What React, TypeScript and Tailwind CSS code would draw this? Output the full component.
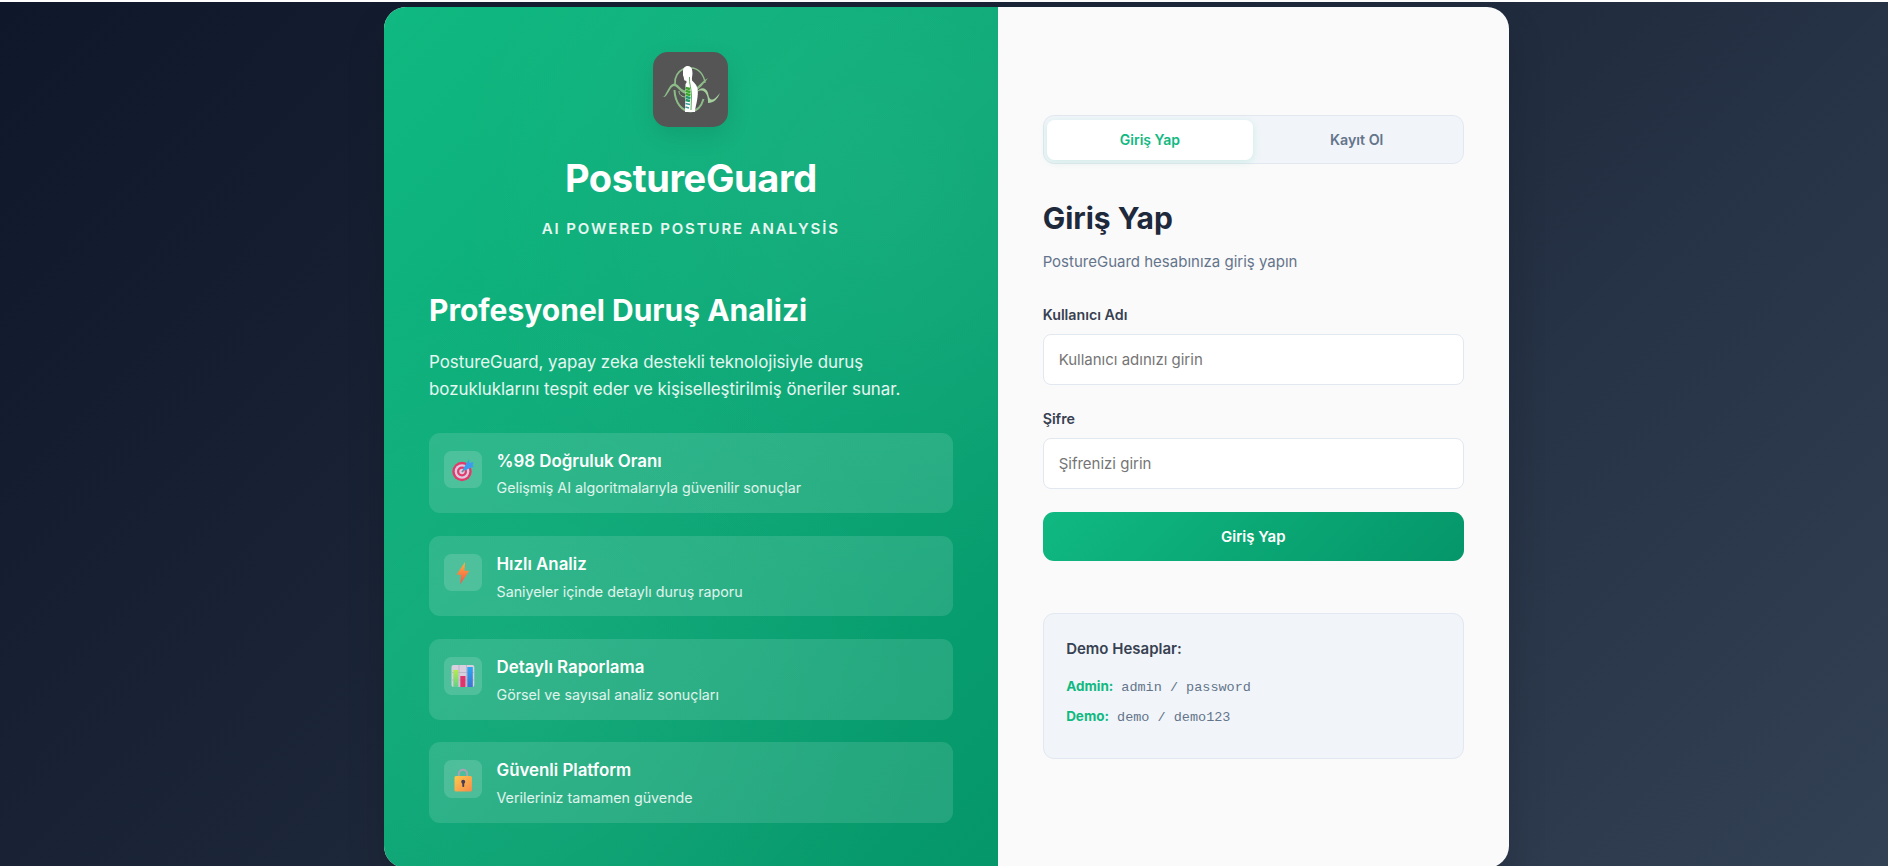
import React from "react";

function Logo() {
  return (
    <svg viewBox="1 0 100 100" className="h-[100px] w-[100px] shrink-0" fill="none">
      <path d="M44 28.500 C37 32 34.500 38 35 44" stroke="#8dbb88" strokeWidth="1.700" />
      <path d="M34.500 50 C35 63 42 71.500 51 71.500 C57 71 61.500 66 63.500 59" stroke="#8dbb88" strokeWidth="2" />
      <path d="M51 28 C59 28 64 35 65 43" stroke="#8dbb88" strokeWidth="1.400" />
      <path d="M22 56.500 C25 60 28 44 34 43.500 C40 44 40 51.500 48 50.500 C58 50 60 42 68 38 C63 45 56 53 49 54 C41 55 39 47 34 46 C29 47 27 60 22 56.500Z" fill="#8dbb88" />
      <path d="M57 52 C60 47 66 47 68 53 C69 58 70 60 73 59.500 C76 58 78 55 80 53 C77 60 74 62.500 68 63 C68.500 56 65 47 57 52Z" fill="#a6cf9e" />
      <path d="M43 31 C43 25 52 24 52.300 31 C53 35 51.500 37 52 40.500 C55.500 44 58.300 46 57.800 54 C57.300 62 55.500 66 55 72 L45 72 L45.500 44 C46.500 43 47 42 46 40.500 C43.500 41.500 44.500 38 43 35.500Z" fill="#fff" />
      <path d="M49.500 37 C49 44 51.500 48 51.500 56 L51 70" stroke="#5cae5b" strokeWidth="1" />
      <path d="M45.500 48 L50 49 M45.500 51 L50.500 52 M45.500 54 L50.500 55" stroke="#3aa62f" strokeWidth="2.700" />
      <path d="M45.500 57 L50.500 58 M45.500 60 L50 61" stroke="#239a6b" strokeWidth="2.500" />
      <path d="M45.500 63.500 L50 64.500 M45.500 67 L49 68" stroke="#3a9b9c" strokeWidth="1.500" />
      <path d="M39 51 C39 55 42 57 46 57" stroke="#9ccb96" strokeWidth="1" />
    </svg>
  );
}

function TargetIcon() {
  return (
    <svg viewBox="0 0 24 24" className="h-6 w-6">
      <circle cx="11" cy="13.500" r="9.700" fill="#e3396b" />
      <circle cx="11" cy="13.500" r="7.300" fill="#dccbe0" />
      <circle cx="11" cy="13.500" r="5" fill="#e3396b" />
      <circle cx="11" cy="13.500" r="2.700" fill="#dccbe0" />
      <path d="M11 14 L16 8" stroke="#7486a0" strokeWidth="1.800" />
      <path d="M12 11 L15 6 L18 1.500 L18.500 5 L22.500 4 L21.500 7.500 L23 8.500 L18 10.500 L14 12.500Z" fill="#3d9bee" />
    </svg>
  );
}

function BoltIcon() {
  return (
    <svg viewBox="0 0 24 24" className="h-6 w-6">
      <defs>
        <linearGradient id="bolt" x1="0" y1="0" x2="0" y2="1">
          <stop offset="0" stopColor="#ffb43a" />
          <stop offset="1" stopColor="#f5504d" />
        </linearGradient>
      </defs>
      <path d="M14 1 L5.500 13.800 H10 L9.300 23.300 L18.300 9.800 H13.500Z" fill="url(#bolt)" />
    </svg>
  );
}

function ChartIcon() {
  return (
    <svg viewBox="0 0 24 24" className="h-6 w-6">
      <defs>
        <linearGradient id="barGreen" x1="0" y1="0" x2="0" y2="1">
          <stop offset="0" stopColor="#b5ea4e" />
          <stop offset="1" stopColor="#62d18c" />
        </linearGradient>
        <linearGradient id="barBlue" x1="0" y1="0" x2="0" y2="1">
          <stop offset="0" stopColor="#2ba7f3" />
          <stop offset="1" stopColor="#3d73cf" />
        </linearGradient>
      </defs>
      <rect x=".5" y="1" width="22.800" height="22" rx="2" fill="#d8d0df" />
      <path d="M8 1 V23 M15.500 1 V23 M.5 8.500 H23.300 M.5 16 H23.300" stroke="#b9b0c4" strokeWidth=".8" />
      <rect x="2.300" y="6" width="5" height="17" fill="url(#barGreen)" />
      <rect x="9.300" y="12" width="5.200" height="11" fill="#e0356c" />
      <rect x="16.300" y="3" width="5.500" height="20" fill="url(#barBlue)" />
    </svg>
  );
}

function LockIcon() {
  return (
    <svg viewBox="0 0 24 24" className="h-6 w-6">
      <defs>
        <linearGradient id="lock" x1="0" y1="0" x2="1" y2="1">
          <stop offset="0" stopColor="#ffc94a" />
          <stop offset="1" stopColor="#f58a4d" />
        </linearGradient>
      </defs>
      <path d="M7.800 9 V6.300 C7.800 .3 16.200 .3 16.200 6.300 V9" fill="none" stroke="#a9a3b5" strokeWidth="2" />
      <rect x="3.500" y="8" width="17.500" height="15.500" rx="1.500" fill="url(#lock)" />
      <circle cx="12.200" cy="13.800" r="2" fill="#4a3a57" />
      <rect x="11.300" y="14" width="1.900" height="5" rx=".8" fill="#4a3a57" />
    </svg>
  );
}

const features = [
  { icon: <TargetIcon />, title: "%98 Doğruluk Oranı", text: "Gelişmiş AI algoritmalarıyla güvenilir sonuçlar" },
  { icon: <BoltIcon />, title: "Hızlı Analiz", text: "Saniyeler içinde detaylı duruş raporu" },
  { icon: <ChartIcon />, title: "Detaylı Raporlama", text: "Görsel ve sayısal analiz sonuçları" },
  { icon: <LockIcon />, title: "Güvenli Platform", text: "Verileriniz tamamen güvende" },
];

const accounts = [
  { name: "Admin:", login: "admin / password" },
  { name: "Demo:", login: "demo / demo123" },
];

function Field({ label, placeholder, type }: { label: string; placeholder: string; type: string }) {
  return (
    <label className="mb-[23px] block">
      <span className="mb-[8px] block text-[14.25px] leading-[22px] font-semibold text-[#374151]">{label}</span>
      <input
        type={type}
        placeholder={placeholder}
        className="block h-[51px] w-full rounded-[8px] border border-[#e2e8f0] bg-white px-[15px] text-[15px] placeholder:text-[#757575]"
      />
    </label>
  );
}

export default function App() {
  return (
    <div className="h-[866px] overflow-hidden bg-white pt-[2px] font-[Inter,sans-serif]">
      <div className="flex h-[871px] items-start justify-center bg-[linear-gradient(135deg,#0f172a_0%,#1e293b_50%,#334155_100%)] pt-[5px] pl-[5px]">
        <main className="grid h-[861px] w-[1125px] grid-cols-[1.2fr_1fr] overflow-hidden rounded-[22px] bg-[#fafafa] shadow-[0_19px_38px_rgba(0,0,0,0.15)]">
          <section className="bg-[radial-gradient(circle_at_20%_80%,rgba(255,255,255,0.05)_0%,transparent_50%),radial-gradient(circle_at_80%_20%,rgba(255,255,255,0.05)_0%,transparent_50%),linear-gradient(135deg,#10b981_0%,#059669_100%)] px-[45px] pt-[45px] text-white">
            <div className="flex flex-col items-center">
              <div className="flex h-[75px] w-[75px] items-center justify-center rounded-[15px] bg-[#555] shadow-[0_8px_24px_rgba(0,0,0,0.1)]">
                <Logo />
              </div>
              <h1 className="mt-[21px] text-[38px] leading-[60px] font-bold tracking-[-0.38px]">PostureGuard</h1>
              <p className="mt-[9px] text-[15px] leading-[24px] font-semibold tracking-[1.88px] text-white/90">AI POWERED POSTURE ANALYSİS</p>
            </div>
            <h2 className="mt-[45px] text-[30px] leading-[48px] font-bold">Profesyonel Duruş Analizi</h2>
            <p className="mt-[15px] text-[16.875px] leading-[27px] text-white/90">
              PostureGuard, yapay zeka destekli teknolojisiyle duruş<br />bozukluklarını tespit eder ve kişiselleştirilmiş öneriler sunar.
            </p>
            <ul className="mt-[29.600px] flex flex-col gap-[22.500px]">
              {features.map((f) => (
                <li key={f.title} className="flex h-[80.700px] items-start gap-[15px] rounded-[11px] bg-white/12 p-[15px]">
                  <span className="mt-[3.200px] flex h-[37.500px] w-[37.500px] shrink-0 items-center justify-center rounded-[7.500px] bg-white/15 pt-[1px]">{f.icon}</span>
                  <div>
                    <h3 className="text-[16.875px] leading-[26px] font-semibold">{f.title}</h3>
                    <p className="mt-[2.800px] text-[14.25px] leading-[23px] text-white/85">{f.text}</p>
                  </div>
                </li>
              ))}
            </ul>
          </section>
          <section className="px-[45px] pt-[108px]">
            <div className="mb-[30px] flex h-[49px] rounded-[11px] border border-[#e2e8f0] bg-[#f1f5f9] px-[3px] pt-[4px] pb-[3px]">
              <button className="flex-1 rounded-[7.500px] bg-white pb-[1.500px] text-[14px] font-semibold text-[#10b981] shadow-[0_2px_8px_rgba(16,185,129,0.15)]">Giriş Yap</button>
              <button className="flex-1 rounded-[7.500px] pb-[1.500px] text-[14.25px] font-semibold text-[#64748b]">Kayıt Ol</button>
            </div>
            <h2 className="text-[30px] leading-[48px] font-bold text-[#1e293b]">Giriş Yap</h2>
            <p className="mt-[8px] mb-[30px] text-[15px] leading-[24px] text-[#64748b]">PostureGuard hesabınıza giriş yapın</p>
            <Field label="Kullanıcı Adı" placeholder="Kullanıcı adınızı girin" type="text" />
            <Field label="Şifre" placeholder="Şifrenizi girin" type="password" />
            <button className="block h-[49px] w-full rounded-[11px] bg-[linear-gradient(135deg,#10b981,#059669)] pt-[2px] text-[15px] font-semibold text-white">Giriş Yap</button>
            <aside className="mt-[52px] h-[146px] rounded-[11px] border border-[#e2e8f0] bg-[#f1f5f9] px-[22.500px] pt-[23px]">
              <h3 className="mb-[14px] text-[15px] leading-[24px] font-semibold text-[#374151]">Demo Hesaplar:</h3>
              {accounts.map((a) => (
                <p key={a.name} className="mb-[8px] flex h-[22px] items-baseline gap-[8px] text-[13.500px] leading-[22px] text-[#64748b]">
                  <strong className="font-bold text-[#10b981]">{a.name}</strong>
                  <span className="font-['Liberation_Mono',monospace]">{a.login}</span>
                </p>
              ))}
            </aside>
          </section>
        </main>
      </div>
    </div>
  );
}
